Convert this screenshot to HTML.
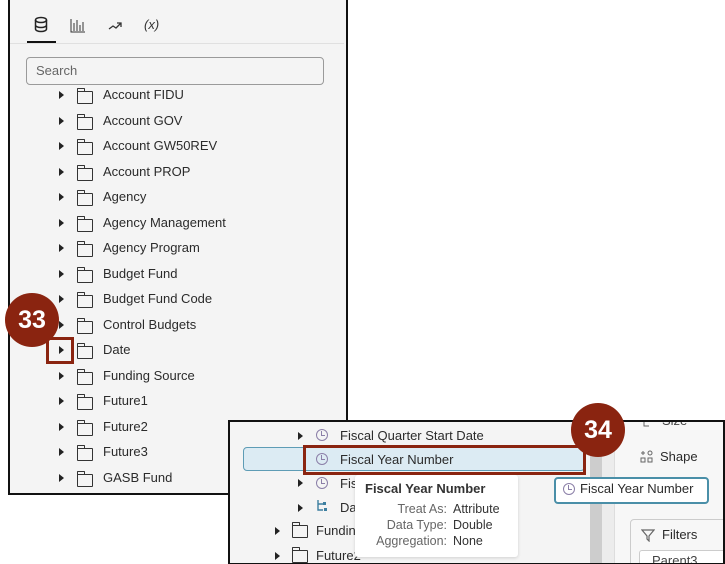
<html><head><style>
html,body{margin:0;width:725px;height:564px;overflow:hidden}
body{background:#fff;position:relative;font-family:"Liberation Sans",sans-serif;color:#2b2b2b}
.a{position:absolute}
.p1{left:8px;top:-2px;width:336px;height:493px;border:2px solid #111;background:#f4f4f4}
.row{position:absolute;height:20px;font-size:13px;line-height:20px;white-space:nowrap}
.tri{position:absolute;width:0;height:0;border-top:4px solid transparent;border-bottom:4px solid transparent;border-left:5px solid #222}
.fold{position:absolute;width:14px;height:11px;border:1.5px solid #333;border-radius:1px}
.fold:before{content:"";position:absolute;left:-1.5px;top:-4px;width:6px;height:3px;border:1.5px solid #333;border-bottom:none;border-radius:1px 1px 0 0}
.badge{position:absolute;width:54px;height:54px;border-radius:50%;background:#8a2410;color:#fff;font-weight:bold;font-size:25px;line-height:54px;text-align:center}
.clk{position:absolute;width:10px;height:10px;border:1.5px solid #8b7fa8;border-radius:50%}
.clk:after{content:"";position:absolute;left:4px;top:1px;width:3px;height:4px;border-left:1.3px solid #8b7fa8;border-bottom:1.3px solid #8b7fa8}
</style></head><body>
<div class="a p1"></div>
<svg class="a" style="left:33px;top:16px" width="140" height="22">
<ellipse cx="8" cy="4" rx="5.5" ry="2.5" fill="none" stroke="#222" stroke-width="1.5"/>
<path d="M2.5 4v9c0 1.5 2.5 2.5 5.5 2.5s5.5-1 5.5-2.5V4M2.5 9c0 1.5 2.5 2.5 5.5 2.5s5.5-1 5.5-2.5" fill="none" stroke="#222" stroke-width="1.5"/>
<path d="M38 3v13h14M41 15V7M44 15V4M47 15V9M50 15V6" stroke="#333" stroke-width="1" fill="none"/>
<path d="M76 13l4-3 3 2 5-5M84 7h4v4" stroke="#333" stroke-width="1.3" fill="none"/>
<text x="111" y="13" font-size="13" font-style="italic" fill="#333" font-family="Liberation Sans">(x)</text>
</svg>
<div class="a" style="left:27px;top:41px;width:29px;height:2px;background:#111"></div>
<div class="a" style="left:10px;top:43px;width:334px;height:1px;background:#e0e0e0"></div>
<div class="a" style="left:26px;top:57px;width:296px;height:26px;border:1px solid #9a9a9a;border-radius:4px;background:#f4f4f4;font-size:13px;line-height:26px;color:#666;text-indent:9px">Search</div>
<div class="a" style="left:0;top:0">
<div class="tri" style="left:59px;top:91px"></div><div class="fold" style="left:77px;top:91px"></div><div class="row" style="left:103px;top:85px">Account FIDU</div>
<div class="tri" style="left:59px;top:117px"></div><div class="fold" style="left:77px;top:117px"></div><div class="row" style="left:103px;top:111px">Account GOV</div>
<div class="tri" style="left:59px;top:142px"></div><div class="fold" style="left:77px;top:142px"></div><div class="row" style="left:103px;top:136px">Account GW50REV</div>
<div class="tri" style="left:59px;top:168px"></div><div class="fold" style="left:77px;top:168px"></div><div class="row" style="left:103px;top:162px">Account PROP</div>
<div class="tri" style="left:59px;top:193px"></div><div class="fold" style="left:77px;top:193px"></div><div class="row" style="left:103px;top:187px">Agency</div>
<div class="tri" style="left:59px;top:219px"></div><div class="fold" style="left:77px;top:219px"></div><div class="row" style="left:103px;top:213px">Agency Management</div>
<div class="tri" style="left:59px;top:244px"></div><div class="fold" style="left:77px;top:244px"></div><div class="row" style="left:103px;top:238px">Agency Program</div>
<div class="tri" style="left:59px;top:270px"></div><div class="fold" style="left:77px;top:270px"></div><div class="row" style="left:103px;top:264px">Budget Fund</div>
<div class="tri" style="left:59px;top:295px"></div><div class="fold" style="left:77px;top:295px"></div><div class="row" style="left:103px;top:289px">Budget Fund Code</div>
<div class="tri" style="left:59px;top:321px"></div><div class="fold" style="left:77px;top:321px"></div><div class="row" style="left:103px;top:315px">Control Budgets</div>
<div class="tri" style="left:59px;top:346px"></div><div class="fold" style="left:77px;top:346px"></div><div class="row" style="left:103px;top:340px">Date</div>
<div class="tri" style="left:59px;top:372px"></div><div class="fold" style="left:77px;top:372px"></div><div class="row" style="left:103px;top:366px">Funding Source</div>
<div class="tri" style="left:59px;top:397px"></div><div class="fold" style="left:77px;top:397px"></div><div class="row" style="left:103px;top:391px">Future1</div>
<div class="tri" style="left:59px;top:423px"></div><div class="fold" style="left:77px;top:423px"></div><div class="row" style="left:103px;top:417px">Future2</div>
<div class="tri" style="left:59px;top:448px"></div><div class="fold" style="left:77px;top:448px"></div><div class="row" style="left:103px;top:442px">Future3</div>
<div class="tri" style="left:59px;top:474px"></div><div class="fold" style="left:77px;top:474px"></div><div class="row" style="left:103px;top:468px">GASB Fund</div>
</div>
<div class="a" style="left:46px;top:337px;width:22px;height:21px;border:3px solid #8a2410"></div>
<div class="badge" style="left:5px;top:293px">33</div>
<div class="a" style="left:228px;top:420px;width:493px;height:141px;border:2px solid #111;background:#f4f4f4;overflow:hidden">
 <div class="a" style="left:360px;top:0;width:12px;height:141px;background:#cdcdcd"></div>
 <div class="a" style="left:372px;top:0;width:12px;height:141px;background:#ececec"></div>
 <div class="a" style="left:384px;top:0;width:115px;height:141px;background:#f7f7f7;border-left:1px solid #ddd"></div>
 <div class="a" style="left:432px;top:-9px;font-size:13px;color:#444">Size</div>
 <svg class="a" style="left:412px;top:0" width="10" height="6"><path d="M2 0v4h5" stroke="#666" fill="none"/></svg>
 <div class="a" style="left:400px;top:97px;width:100px;height:60px;border:1px solid #ccc;border-radius:4px;background:#f7f7f7"></div>
 <svg class="a" style="left:411px;top:106px" width="14" height="14"><path d="M1 2h12L8 8v5L6 11V8z" fill="none" stroke="#666" stroke-width="1.2"/></svg>
 <div class="row" style="left:432px;top:103px">Filters</div>
 <div class="a" style="left:409px;top:128px;width:90px;height:20px;border:1px solid #ccc;border-radius:3px;background:#fff;font-size:13px;line-height:20px;text-indent:12px;color:#444;white-space:nowrap">Parent3</div>
</div>
<div class="a" style="left:243px;top:447px;width:340px;height:22px;border:1px solid #5e9cb5;border-radius:4px;background:#dcebf3"></div>
<div class="tri" style="left:298px;top:432px"></div><div class="clk" style="left:316px;top:429px"></div><div class="row" style="left:340px;top:426px">Fiscal Quarter Start Date</div>
<div class="clk" style="left:316px;top:453px"></div><div class="row" style="left:340px;top:450px">Fiscal Year Number</div>
<div class="tri" style="left:298px;top:479px"></div><div class="clk" style="left:316px;top:477px"></div><div class="row" style="left:340px;top:474px">Fis</div>
<div class="tri" style="left:298px;top:504px"></div>
<svg class="a" style="left:316px;top:499px" width="14" height="14"><path d="M2 1v10h5M2 5h5" stroke="#3d7fa0" stroke-width="1.4" fill="none"/><rect x="7" y="3" width="3" height="3" fill="#3d7fa0"/><rect x="8" y="9" width="3" height="3" fill="#3d7fa0"/></svg>
<div class="row" style="left:340px;top:498px">Da</div>
<div class="tri" style="left:275px;top:527px"></div><div class="fold" style="left:292px;top:525px"></div><div class="row" style="left:316px;top:521px">Fundin</div>
<div class="tri" style="left:275px;top:552px"></div><div class="fold" style="left:292px;top:550px"></div><div class="row" style="left:316px;top:546px">Future2</div>
<div class="a" style="left:355px;top:475px;width:163px;height:82px;background:#fff;border-radius:3px;box-shadow:0 1px 3px rgba(0,0,0,.15)">
 <div class="a" style="left:10px;top:6px;font-size:13px;font-weight:bold;color:#333;white-space:nowrap">Fiscal Year Number</div>
 <div class="a" style="left:0;top:26px;width:92px;text-align:right;font-size:12.5px;line-height:16px;color:#666">Treat As:<br>Data Type:<br>Aggregation:</div>
 <div class="a" style="left:98px;top:26px;font-size:12.5px;line-height:16px;color:#333">Attribute<br>Double<br>None</div>
</div>
<div class="a" style="left:303px;top:445px;width:277px;height:24px;border:3px solid #8a2410"></div>
<div class="badge" style="left:571px;top:403px">34</div>
<svg class="a" style="left:640px;top:450px" width="14" height="14"><path d="M1 3h4M3 1v4" stroke="#666" stroke-width="1"/><circle cx="10" cy="3" r="2" fill="none" stroke="#666"/><rect x="1" y="8" width="4" height="4" fill="none" stroke="#666"/><rect x="8" y="8" width="4" height="4" fill="none" stroke="#666"/></svg>
<div class="row" style="left:660px;top:447px">Shape</div>
<div class="a" style="left:554px;top:477px;width:151px;height:23px;border:2px solid #4a8fa8;border-radius:4px;background:#fff"></div>
<div class="clk" style="left:563px;top:483px"></div><div class="row" style="left:580px;top:479px">Fiscal Year Number</div>
</body></html>
